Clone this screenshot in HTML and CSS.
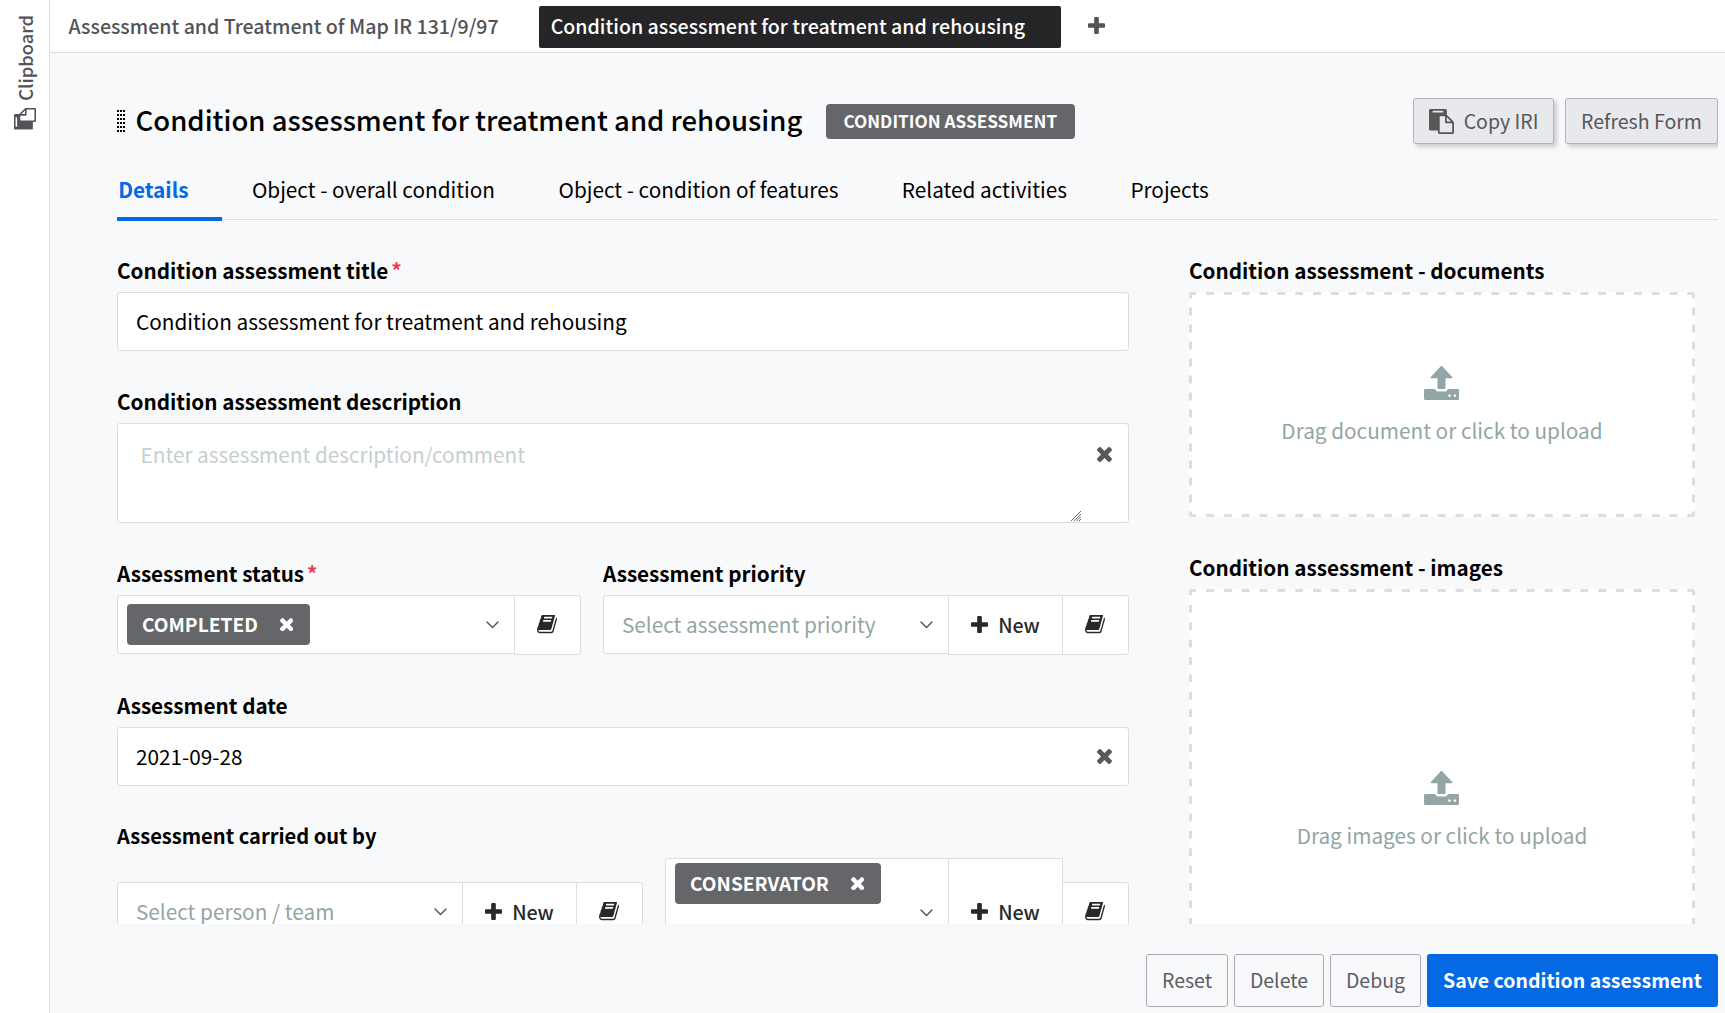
FILE: index.html
```html
<!DOCTYPE html>
<html lang="en">
<head>
<meta charset="utf-8">
<title>Condition assessment for treatment and rehousing</title>
<link rel="stylesheet" href="styles.css">
</head>
<body>
<svg class="sprite" aria-hidden="true">
  <symbol id="plus" viewBox="192 128 1408 1408"><path d="M1600 736v192q0 40-28 68t-68 28h-416v416q0 40-28 68t-68 28h-192q-40 0-68-28t-28-68v-416h-416q-40 0-68-28t-28-68v-192q0-40 28-68t68-28h416v-416q0-40 28-68t68-28h192q40 0 68 28t28 68v416h416q40 0 68 28t28 68z"/></symbol>
  <symbol id="times" viewBox="302 366 1188 1188"><path d="M1490 1322q0 40-28 68l-136 136q-28 28-68 28t-68-28l-294-294-294 294q-28 28-68 28t-68-28l-136-136q-28-28-28-68t28-68l294-294-294-294q-28-28-28-68t28-68l136-136q28-28 68-28t68 28l294 294 294-294q28-28 68-28t68 28l136 136q28 28 28 68t-28 68l-294 294 294 294q28 28 28 68z"/></symbol>
  <symbol id="book" viewBox="60 250 1672 1420" preserveAspectRatio="none"><path d="M1703 478q40 57 18 129l-275 906q-19 64-76.5 107.5t-122.5 43.5h-923q-77 0-148.5-53.5t-99.5-131.5q-24-67-2-127 0-4 3-27t4-37q1-8-3-21.5t-3-19.5q2-11 8-21t16.5-23.5 16.5-23.5q23-38 45-91.5t30-91.5q3-10 .5-30t-.5-28q3-11 17-28t17-23q21-36 42-92t25-90q1-9-2.5-32t.5-28q4-13 22-30.5t22-22.5q19-26 42.5-84.5t27.5-96.5q1-8-3-25.5t-2-26.5q2-8 9-18t18-23 17-21q8-12 16.5-30.5t15-35 16-36 19.5-32 26.5-23.5 36-11.5 47.5 5.5l-1 3q38-9 51-9h761q74 0 114 56t18 130l-274 906q-36 119-71.5 153.5t-128.5 34.5h-869q-27 0-38 15-11 16-1 43 24 70 144 70h923q29 0 56-15.5t35-41.5l300-987q7-22 5-57 38 15 59 43zm-1064 2q-4 13 2 22.5t20 9.5h608q13 0 25.5-9.5t16.5-22.5l21-64q4-13-2-22.5t-20-9.5h-608q-13 0-25.5 9.5t-16.5 22.5zm-83 256q-4 13 2 22.5t20 9.5h608q13 0 25.5-9.5t16.5-22.5l21-64q4-13-2-22.5t-20-9.5h-608q-13 0-25.5 9.5t-16.5 22.5z"/></symbol>
  <symbol id="paste" viewBox="0 0 1792 1792"><path d="M768 1664h896v-640h-416q-40 0-68-28t-28-68v-416h-384v1152zm256-1440v-64q0-13-9.5-22.5t-22.5-9.5h-704q-13 0-22.5 9.5t-9.5 22.5v64q0 13 9.5 22.5t22.5 9.5h704q13 0 22.5-9.5t9.5-22.5zm256 672h299l-299-299v299zm512 128v672q0 40-28 68t-68 28h-960q-40 0-68-28t-28-68v-160h-544q-40 0-68-28t-28-68v-1344q0-40 28-68t68-28h1088q40 0 68 28t28 68v328q21 13 36 28l408 408q28 28 48 76t20 88z"/></symbol>
  <symbol id="chevron" viewBox="0 0 13 8"><path d="M1 1l5.5 5.5L12 1" fill="none" stroke="currentColor" stroke-width="1.5" stroke-linecap="round"/></symbol>
  <symbol id="grip" viewBox="0 0 8 22"><path d="M1 0v22M4 0v22M7 0v22" stroke="currentColor" stroke-width="2" stroke-dasharray="2 2"/></symbol>
  <symbol id="resize" viewBox="0 0 10 10"><path d="M0 10L10 0M3 10l7-7M5.500 10L10 5.500M8 10l2-2" fill="none" stroke="currentColor" stroke-width="1"/></symbol>
  <symbol id="upload" viewBox="0 0 35 34"><path d="M16.8.3a1 1 0 0 1 1.4 0l10 10.6c.5.6.2 1.4-.6 1.4h-6.1V22c0 .7-.4 1-1 1h-6c-.6 0-1-.3-1-1v-9.700h-6.100c-.8 0-1.100-.8-.6-1.400z"/><path fill-rule="evenodd" d="M1.500 23H11c.8 1.700 2 2.600 3.600 2.600h5.800c1.600 0 2.800-.9 3.600-2.600h9.500c.9 0 1.500.6 1.500 1.500v8c0 .9-.6 1.500-1.500 1.500h-32C.6 34 0 33.400 0 32.500v-8C0 23.600.6 23 1.500 23zM25.500 28.300a1.300 1.300 0 1 0 .01 0zM30.900 28.300a1.300 1.300 0 1 0 .01 0z"/></symbol>
</svg>
<div class="app">
  <aside class="sidebar">
    <div class="clipboard"><svg class="icon-clip"><use href="#paste"/></svg><span>Clipboard</span></div>
  </aside>
  <div class="main">
    <nav class="topbar">
      <a class="frame">Assessment and Treatment of Map IR 131/9/97</a>
      <a class="frame active">Condition assessment for treatment and rehousing</a>
      <svg class="add"><use href="#plus"/></svg>
    </nav>
    <div class="page">
      <header class="header">
        <svg class="grip"><use href="#grip"/></svg>
        <h1>Condition assessment for treatment and rehousing</h1>
        <span class="badge">CONDITION ASSESSMENT</span>
        <div class="actions">
          <button class="raised"><svg class="icon-paste"><use href="#paste"/></svg>Copy IRI</button>
          <button class="raised">Refresh Form</button>
        </div>
      </header>
      <nav class="tabs">
        <a class="tab current">Details</a><a class="tab">Object - overall condition</a><a class="tab">Object - condition of features</a><a class="tab">Related activities</a><a class="tab">Projects</a>
      </nav>
      <div class="body">
        <div class="column left">
          <section class="field">
            <label>Condition assessment title<em>*</em></label>
            <div class="input">Condition assessment for treatment and rehousing</div>
          </section>
          <section class="field">
            <label>Condition assessment description</label>
            <div class="area"><div class="entry"><textarea placeholder="Enter assessment description/comment"></textarea><svg class="resize"><use href="#resize"/></svg></div><svg class="clear"><use href="#times"/></svg></div>
          </section>
          <div class="pair">
            <section class="field status">
              <label>Assessment status<em>*</em></label>
              <div class="group">
                <div class="select has-tag"><span class="tag">COMPLETED<svg><use href="#times"/></svg></span><svg class="chevron"><use href="#chevron"/></svg></div>
                <button class="addon book"><svg><use href="#book"/></svg></button>
              </div>
            </section>
            <section class="field priority">
              <label>Assessment priority</label>
              <div class="group">
                <div class="select"><span class="hint">Select assessment priority</span><svg class="chevron"><use href="#chevron"/></svg></div>
                <button class="addon new"><svg><use href="#plus"/></svg>New</button>
                <button class="addon book"><svg><use href="#book"/></svg></button>
              </div>
            </section>
          </div>
          <section class="field">
            <label>Assessment date</label>
            <div class="input">2021-09-28<svg class="clear"><use href="#times"/></svg></div>
          </section>
          <section class="field">
            <label class="compact">Assessment carried out by</label>
            <div class="carried">
              <div class="group person">
                <div class="select"><span class="hint">Select person / team</span><svg class="chevron"><use href="#chevron"/></svg></div>
                <button class="addon new"><svg><use href="#plus"/></svg>New</button>
                <button class="addon book"><svg><use href="#book"/></svg></button>
              </div>
              <div class="group role">
                <div class="select multi"><span class="tag">CONSERVATOR<svg><use href="#times"/></svg></span><svg class="chevron"><use href="#chevron"/></svg></div>
                <button class="addon new"><svg><use href="#plus"/></svg>New</button>
                <button class="addon book"><svg><use href="#book"/></svg></button>
              </div>
            </div>
          </section>
        </div>
        <div class="column right">
          <section class="field">
            <label>Condition assessment - documents</label>
            <div class="drop documents"><svg><use href="#upload"/></svg><span>Drag document or click to upload</span></div>
          </section>
          <section class="field">
            <label>Condition assessment - images</label>
            <div class="drop images"><svg><use href="#upload"/></svg><span>Drag images or click to upload</span></div>
          </section>
        </div>
      </div>
      <footer class="footer">
        <button class="plain reset">Reset</button>
        <button class="plain delete">Delete</button>
        <button class="plain debug">Debug</button>
        <button class="save">Save condition assessment</button>
      </footer>
    </div>
  </div>
</div>
</body>
</html>
```
FILE: styles.css
```css
* { box-sizing: border-box; }
body {
  margin: 0;
  font-family: "Noto Sans CJK SC", "Noto Sans", sans-serif;
  font-size: 20.75px;
  line-height: 30px;
  color: #000;
}
svg { fill: currentColor; flex: none; display: block; }
.sprite { position: absolute; width: 0; height: 0; }
button { font: inherit; margin: 0; padding: 0; white-space: nowrap; }

.app { display: flex; width: 1725px; height: 1013px; overflow: hidden; background: #f8f9fb; }
.sidebar { flex: none; width: 50px; background: #fff; border-right: 1px solid #dcdde1; padding: 15px 0 0 10px; color: #525257; }
.clipboard { display: flex; align-items: center; gap: 7px; writing-mode: vertical-rl; transform: rotate(180deg); width: 30px; font-size: 18.3px; font-weight: 500; line-height: 30px; }
.icon-clip { width: 22px; height: 22px; transform: rotate(90deg); }
.main { flex: 1; min-width: 0; display: flex; flex-direction: column; }

.topbar { flex: none; height: 53px; background: #fff; border-bottom: 1px solid #dcdde1; display: flex; align-items: center; padding: 0 0 0 5px; }
.frame { height: 42px; line-height: 39px; padding: 0 40px 0 13.500px; font-size: 19.57px; font-weight: 500; color: #525257; white-space: nowrap; margin-top: 2px; }
.frame.active { width: 522px; padding-right: 0; padding-left: 12px; background: #252527; color: #fff; border-radius: 2px; }
.add { width: 17px; height: 17px; margin-left: 27px; margin-bottom: 1px; color: #525257; }

.page { flex: 1; min-height: 0; display: flex; flex-direction: column; padding: 45px 7px 6px 67px; }
.header { flex: none; display: flex; align-items: center; height: 46px; }
.grip { width: 8px; height: 22px; margin-right: 10.500px; }
h1 { margin: 0; font-size: 27.5px; font-weight: 500; line-height: 40px; padding-bottom: 4px; white-space: nowrap; }
.badge { margin-left: 23.500px; width: 249px; text-align: center; height: 35px; line-height: 33px; background: #65666a; color: #fff; border-radius: 4px; font-size: 17.2px; font-weight: 700; white-space: nowrap; }
.actions { margin-left: auto; display: flex; gap: 11px; height: 54px; margin-top: 8px; padding-left: 8px; overflow: hidden; }
.raised { height: 46px; display: flex; align-items: center; justify-content: center; background: #e8e9ed; border: 1px solid #b3b4b6; border-radius: 3px; box-shadow: 3px 3px 4px rgba(0, 0, 0, .18); color: #575757; font-size: 19.55px; width: 141px; }
.raised + .raised { width: 153px; }
.icon-paste { width: 25px; height: 25px; margin-right: 10px; }

.tabs { flex: none; height: 76px; border-bottom: 1px solid #dcdde1; display: flex; gap: 29px; line-height: 91px; }
.tab { height: 77px; padding: 0 33.300px 0 1.200px; white-space: nowrap; }
.current { font-weight: 700; color: #0469e3; border-bottom: 4px solid #0469e3; }

.body { flex: none; height: 704px; padding: 35px 23px 0 0; display: flex; gap: 60px; overflow: hidden; }
.left { width: 1012px; }
.right { width: 506px; }
.column { display: flex; flex-direction: column; gap: 35px; flex: none; }
label { display: block; font-size: 20.68px; font-weight: 700; margin-bottom: 7px; }
.compact { font-size: 20.1px; }
em { font-style: normal; color: #f5384f; margin-left: 3px; }
.input { height: 59px; border: 1px solid #dcdde1; border-radius: 3px; background: #fff; padding: 0 16px 1px 18px; display: flex; align-items: center; }
.clear { width: 15px; height: 15px; margin-left: auto; color: #55595e; }
.area { height: 100px; border: 1px solid #dcdde1; border-radius: 3px; background: #fff; display: flex; padding-right: 16px; }
.area .clear { margin-top: 23px; }
.entry { position: relative; width: 964px; }
.resize { position: absolute; right: 1px; bottom: 1px; width: 10px; height: 10px; color: #6b6b6b; }
textarea { display: block; width: 100%; height: 98px; border: 0; outline: 0; padding: 15px 22.500px; background: none; font: inherit; resize: none; overflow: hidden; }
textarea::placeholder { color: #c5cfcf; opacity: 1; }

.pair { display: flex; justify-content: space-between; }
.status { width: 464px; }
.priority { width: 526px; }
.group { display: flex; align-items: flex-start; }
.select { flex: 1; height: 59px; border: 1px solid #dcdde1; border-radius: 3px 0 0 3px; background: #fff; display: flex; align-items: center; padding: 0 15px 0 18px; }
.has-tag { padding-left: 9px; }
.hint { color: #93a5a5; padding-bottom: 2px; white-space: nowrap; }
.chevron { width: 13px; height: 8px; margin-left: auto; color: #55595e; }
.tag { height: 41px; line-height: 39px; display: flex; align-items: center; padding: 0 17px 0 15px; gap: 22px; background: #65666a; color: #fff; border-radius: 4px; font-size: 19.15px; font-weight: 700; }
.tag svg { width: 13.500px; height: 13.500px; }
.addon { height: 60px; border: 1px solid #dcdde1; background: #fff; color: #28282a; display: flex; align-items: center; justify-content: center; margin-left: -1px; }
.book { width: 67px; border-radius: 0 3px 3px 0; }
.book svg { width: 20px; height: 18.500px; margin-right: 1px; margin-bottom: 1px; }
.new { width: 115px; gap: 10px; font-weight: 500; font-size: 19.6px; }
.new svg { width: 17px; height: 17px; margin-bottom: 2px; }

.carried { display: flex; justify-content: space-between; height: 108px; }
.person { width: 526px; margin-top: 24px; }
.role { width: 464px; }
.role .new { height: 108px; }
.role .book { margin-top: 24px; }
.multi { height: 108px; padding-left: 9px; align-items: flex-start; padding-top: 4px; }
.multi .chevron { margin-top: 46px; }

/* Long-gap dashes along each edge of the upload area */
.drop {
  --dash: #dcdde1 8px, transparent 8px;
  background:
    linear-gradient(90deg, var(--dash)) -.8px 0 / 17.830px 3px repeat-x,
    linear-gradient(90deg, var(--dash)) -.8px 100% / 17.830px 3px repeat-x,
    linear-gradient(var(--dash)) 0 -1.500px / 3px var(--pitch) repeat-y,
    linear-gradient(var(--dash)) 100% -1.500px / 3px var(--pitch) repeat-y,
    #fff;
  border-radius: 3px; color: #93a5a5; display: flex; flex-direction: column; align-items: center;
}
.drop svg { width: 35px; height: 34px; margin: 0 1px 15px 0; }
.documents { --pitch: 17px; height: 225px; padding-top: 74px; }
.images { --pitch: 17.400px; height: 441px; padding-top: 182px; flex: none; }

.footer { flex: none; margin-top: 30px; display: flex; justify-content: flex-end; gap: 6px; font-size: 19.5px; }
.footer button { height: 53px; border-radius: 3px; padding-bottom: 1px; }
.plain { background: none; border: 1px solid #a9abae; color: #5c5d63; }
.reset { width: 82px; }
.delete { width: 90px; }
.debug { width: 91px; }
.save { width: 291px; border: 0; background: #0469e3; color: #fff; font-weight: 700; }
```
